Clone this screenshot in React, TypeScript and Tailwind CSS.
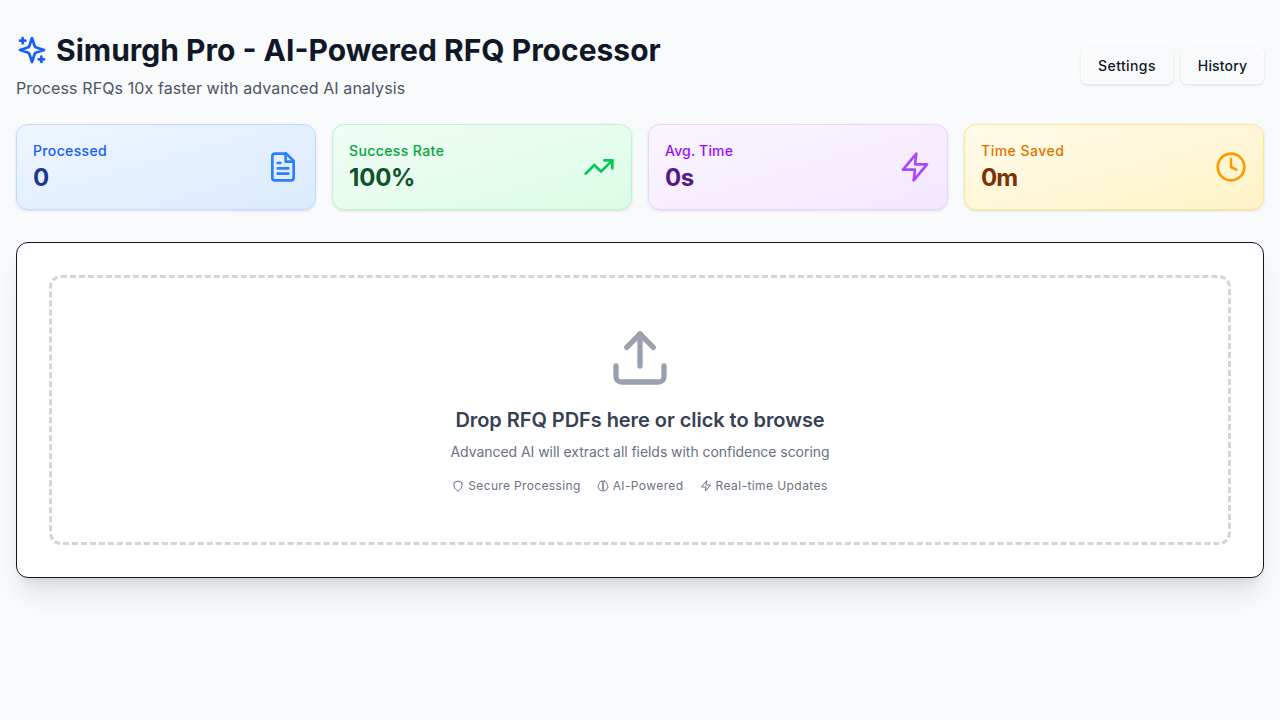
import type { ReactNode } from 'react';
import { Clock, TrendingUp, Upload } from 'lucide-react';

type IconProps = { className?: string };

function Icon({ className, children }: IconProps & { children: ReactNode }) {
  return (
    <svg viewBox="0 0 24 24" fill="none" stroke="currentColor" strokeWidth="2" strokeLinecap="round" strokeLinejoin="round" className={className}>
      {children}
    </svg>
  );
}

const Sparkles = ({ className }: IconProps) => (
  <Icon className={className}>
    <path d="m12 3-1.912 5.813a2 2 0 0 1-1.275 1.275L3 12l5.813 1.912a2 2 0 0 1 1.275 1.275L12 21l1.912-5.813a2 2 0 0 1 1.275-1.275L21 12l-5.813-1.912a2 2 0 0 1-1.275-1.275L12 3Z" />
    <path d="M5 3v4M19 17v4M3 5h4M17 19h4" />
  </Icon>
);

const FileText = ({ className }: IconProps) => (
  <Icon className={className}>
    <path d="M14.5 2H6a2 2 0 0 0-2 2v16a2 2 0 0 0 2 2h12a2 2 0 0 0 2-2V7.5L14.5 2z" />
    <path d="M14 2v6h6M16 13H8M16 17H8M10 9H8" />
  </Icon>
);

const Zap = ({ className }: IconProps) => (
  <Icon className={className}>
    <polygon points="13 2 3 14 12 14 11 22 21 10 12 10 13 2" />
  </Icon>
);

const Shield = ({ className }: IconProps) => (
  <Icon className={className}>
    <path d="M12 22s8-4 8-10V5l-8-3-8 3v7c0 6 8 10 8 10" />
  </Icon>
);

const Brain = ({ className }: IconProps) => (
  <Icon className={className}>
    <path d="M9.5 2A2.5 2.5 0 0 1 12 4.5v15a2.5 2.5 0 0 1-4.96.44 2.5 2.5 0 0 1-2.96-3.08 3 3 0 0 1-.34-5.58 2.5 2.5 0 0 1 1.32-4.24 2.5 2.5 0 0 1 1.98-3A2.5 2.5 0 0 1 9.5 2Z" />
    <path d="M14.5 2A2.5 2.5 0 0 0 12 4.5v15a2.5 2.5 0 0 0 4.96.44 2.5 2.5 0 0 0 2.96-3.08 3 3 0 0 0 .34-5.58 2.5 2.5 0 0 0-1.32-4.24 2.5 2.5 0 0 0-1.98-3A2.5 2.5 0 0 0 14.5 2Z" />
  </Icon>
);

const stats = [
  { label: 'Processed', value: '0', Glyph: FileText, card: 'from-blue-50 to-blue-100 border-blue-200', text: 'text-blue-600 tracking-[0.35px]', num: 'text-blue-900', icon: 'text-blue-500' },
  { label: 'Success Rate', value: '100%', Glyph: TrendingUp, card: 'from-green-50 to-green-100 border-green-200', text: 'text-green-600 tracking-[0.4px]', num: 'text-green-900 tracking-[-0.2px]', icon: 'text-green-500' },
  { label: 'Avg. Time', value: '0s', Glyph: Zap, card: 'from-purple-50 to-purple-100 border-purple-200', text: 'text-purple-600 tracking-[0.17px]', num: 'text-purple-900 tracking-[-0.4px]', icon: 'text-purple-500' },
  { label: 'Time Saved', value: '0m', Glyph: Clock, card: 'from-amber-50 to-amber-100 border-amber-200', text: 'text-amber-600 tracking-[0.5px]', num: 'text-amber-900 tracking-[-1px]', icon: 'text-amber-500' },
];

export default function App() {
  return (
    <div className="min-h-screen bg-gray-50 font-['Inter',sans-serif] text-gray-900">
      <div className="px-4 pt-8">
        <header className="mb-6 flex items-center justify-between">
          <div>
            <h1 className="flex items-center gap-2 text-3xl font-bold text-gray-900">
              <Sparkles className="size-8 text-blue-600" />
              Simurgh Pro - AI-Powered RFQ Processor
            </h1>
            <p className="mt-2 tracking-[0.1px] text-gray-600">Process RFQs 10x faster with advanced AI analysis</p>
          </div>
          <div className="flex gap-2">
            <button className="h-9 w-[92px] rounded-md border border-white/60 text-sm font-medium tracking-[0.4px] whitespace-nowrap shadow-sm">Settings</button>
            <button className="h-9 w-[83px] rounded-md border border-white/60 text-sm font-medium tracking-[0.15px] whitespace-nowrap shadow-sm">History</button>
          </div>
        </header>
        <section className="mb-8 grid grid-cols-4 gap-4">
          {stats.map(({ label, value, Glyph, card, text, num, icon }) => (
            <div key={label} className={`flex items-center justify-between rounded-xl border bg-gradient-to-br p-4 shadow-sm ${card}`}>
              <div>
                <p className={`text-sm font-medium ${text}`}>{label}</p>
                <p className={`-mb-0.5 text-2xl leading-[34px] font-bold ${num}`}>{value}</p>
              </div>
              <Glyph className={`size-8 ${icon}`} />
            </div>
          ))}
        </section>
        <main className="rounded-xl border border-gray-900 bg-white p-8 shadow-xl">
          <div className="flex h-[270px] flex-col items-center rounded-xl border-3 border-dashed border-gray-300 pt-12 text-center">
            <Upload className="mb-4 size-16 text-gray-400" />
            <h2 className="mb-2 text-xl font-semibold tracking-[-0.06px] text-gray-700">Drop RFQ PDFs here or click to browse</h2>
            <p className="mb-4 text-sm tracking-[-0.05px] text-gray-500 [font-variant-ligatures:common-ligatures]">Advanced AI will extract all fields with confidence scoring</p>
            <div className="flex gap-4 text-xs text-gray-500">
              <span className="flex items-center gap-1 tracking-[0.35px]"><Shield className="size-3" />Secure Processing</span>
              <span className="flex items-center gap-1 tracking-[0.4px]"><Brain className="size-3" />AI-Powered</span>
              <span className="flex items-center gap-1 tracking-[0.42px]"><Zap className="size-3" />Real-time Updates</span>
            </div>
          </div>
        </main>
      </div>
    </div>
  );
}
